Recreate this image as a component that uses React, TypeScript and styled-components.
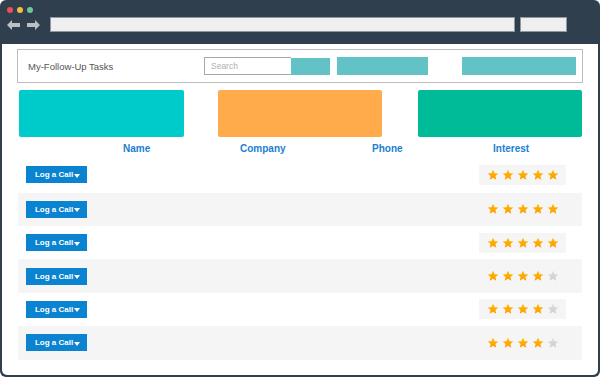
import React from "react";
import styled, { createGlobalStyle } from "styled-components";

const Global = createGlobalStyle`
  html, body { margin: 0; padding: 0; background: #ffffff; }
  body { font-family: "Liberation Sans", Arial, sans-serif; }
`;

const Window = styled.div`
  width: 600px;
  height: 377px;
  background: #2f3f4e;
  border-radius: 6px;
  display: flex;
  flex-direction: column;
  overflow: hidden;
`;

const TopBar = styled.div`
  height: 44px;
  box-sizing: border-box;
  padding: 7px 0 0 7px;
  display: flex;
  flex-direction: column;
  gap: 4px;
`;

const Lights = styled.div`
  display: flex;
  gap: 4px;
`;

const Light = styled.span<{ $c: string }>`
  width: 6px;
  height: 6px;
  border-radius: 50%;
  background: ${(p) => p.$c};
`;

const NavRow = styled.div`
  display: flex;
  align-items: center;
  height: 15px;
`;

const Arrows = styled.div`
  display: flex;
  gap: 7px;
  width: 43px;
`;

const AddressBar = styled.div<{ $w: number }>`
  width: ${(p) => p.$w}px;
  height: 15px;
  box-sizing: border-box;
  background: #efefef;
  border: 1px solid #8d98a3;
  margin-right: 5px;
`;

const Content = styled.div`
  flex: 1;
  margin: 0 2px 2px;
  background: #ffffff;
  border-radius: 0 0 5px 5px;
  padding: 5px 0 0 15px;
  box-sizing: border-box;
`;

const Header = styled.div`
  width: 566px;
  height: 34px;
  box-sizing: border-box;
  border: 1px solid #bdbdbd;
  display: flex;
  align-items: center;
  padding-left: 10px;
`;

const Title = styled.div`
  width: 176px;
  font-size: 9.5px;
  color: #555555;
`;

const SearchInput = styled.div`
  width: 87px;
  height: 18px;
  box-sizing: border-box;
  border: 1px solid #a8a8a8;
  border-right: none;
  font-size: 8.5px;
  color: #b0b0b0;
  padding-left: 6px;
  display: flex;
  align-items: center;
`;

const TealBlock = styled.div<{ $w: number; $ml?: number; $h?: number }>`
  width: ${(p) => p.$w}px;
  height: ${(p) => p.$h ?? 18}px;
  margin-left: ${(p) => p.$ml ?? 0}px;
  background: #62c2c5;
`;

const Cards = styled.div`
  display: flex;
  margin: 7px 0 0 2px;
`;

const Card = styled.div<{ $c: string; $w: number; $ml?: number }>`
  width: ${(p) => p.$w}px;
  height: 47px;
  margin-left: ${(p) => p.$ml ?? 0}px;
  border-radius: 2px;
  background: ${(p) => p.$c};
`;

const Labels = styled.div`
  display: grid;
  grid-template-columns: 117px 132px 121px auto;
  padding-left: 106px;
  margin-top: 2px;
  height: 18px;
  align-items: center;
`;

const Label = styled.div`
  font-size: 10px;
  font-weight: bold;
  color: #1b80cf;
`;

const Rows = styled.div`
  margin-left: 1px;
  width: 564px;
`;

const Row = styled.div<{ $alt: boolean }>`
  height: 33.4px;
  display: flex;
  align-items: center;
  justify-content: space-between;
  padding: 0 16px 0 8px;
  box-sizing: border-box;
  background: ${(p) => (p.$alt ? "#f5f5f5" : "#ffffff")};
  &:first-child {
    height: 35.6px;
  }
`;

const CallButton = styled.div`
  width: 61px;
  height: 17px;
  background: #0a84d0;
  color: #ffffff;
  font-size: 8px;
  font-weight: bold;
  display: flex;
  align-items: center;
  justify-content: center;
  gap: 1px;
  box-sizing: border-box;
  padding-left: 2px;
`;

const Caret = styled.span`
  width: 0;
  height: 0;
  border-left: 3.5px solid transparent;
  border-right: 3.5px solid transparent;
  border-top: 4px solid #ffffff;
  margin-top: 2px;
`;

const StarBox = styled.div`
  width: 87px;
  height: 20px;
  box-sizing: border-box;
  background: #f5f5f5;
  display: flex;
  align-items: center;
  gap: 3px;
  padding-left: 8px;
`;

const Star = ({ on }: { on: boolean }) => (
  <svg width="12" height="12" viewBox="0 0 24 24">
    <defs>
      <linearGradient id={on ? "gOn" : "gOff"} x1="0" y1="0" x2="0" y2="1">
        <stop offset="0" stopColor={on ? "#ffb800" : "#dcdcdc"} />
        <stop offset="1" stopColor={on ? "#ff9c00" : "#cfcfcf"} />
      </linearGradient>
    </defs>
    <path
      d="M12 1.5l3.1 7 7.5.7-5.7 5 1.7 7.4L12 17.7l-6.6 3.9 1.7-7.4-5.7-5 7.5-.7z"
      fill={`url(#${on ? "gOn" : "gOff"})`}
    />
  </svg>
);

const Arrow = ({ dir }: { dir: "l" | "r" }) => (
  <svg width="13" height="10" viewBox="0 0 13 10">
    {dir === "l" ? (
      <path d="M0 5l5-5v3h8v4H5v3z" fill="#b9c0c6" />
    ) : (
      <path d="M13 5l-5-5v3H0v4h8v3z" fill="#b9c0c6" />
    )}
  </svg>
);

const ratings = [5, 5, 5, 4, 4, 4];

export default function App() {
  return (
    <>
      <Global />
      <Window>
        <TopBar>
          <Lights>
            <Light $c="#ec5157" />
            <Light $c="#f4bd45" />
            <Light $c="#6fc59a" />
          </Lights>
          <NavRow>
            <Arrows>
              <Arrow dir="l" />
              <Arrow dir="r" />
            </Arrows>
            <AddressBar $w={465} />
            <AddressBar $w={47} />
          </NavRow>
        </TopBar>
        <Content>
          <Header>
            <Title>My-Follow-Up Tasks</Title>
            <SearchInput>Search</SearchInput>
            <TealBlock $w={39} $h={17} />
            <TealBlock $w={91} $ml={7} />
            <TealBlock $w={114} $ml={34} />
          </Header>
          <Cards>
            <Card $c="#00cbcb" $w={165} />
            <Card $c="#ffab4c" $w={164} $ml={34} />
            <Card $c="#00bb97" $w={164} $ml={36} />
          </Cards>
          <Labels>
            <Label>Name</Label>
            <Label>Company</Label>
            <Label>Phone</Label>
            <Label>Interest</Label>
          </Labels>
          <Rows>
            {ratings.map((r, i) => (
              <Row key={i} $alt={i % 2 === 1}>
                <CallButton>
                  Log a Call
                  <Caret />
                </CallButton>
                <StarBox>
                  {[0, 1, 2, 3, 4].map((s) => (
                    <Star key={s} on={s < r} />
                  ))}
                </StarBox>
              </Row>
            ))}
          </Rows>
        </Content>
      </Window>
    </>
  );
}
